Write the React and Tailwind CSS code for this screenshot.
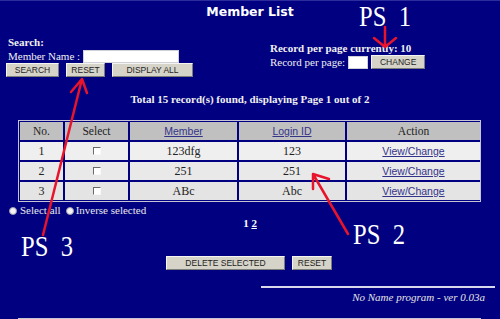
import React from "react";

const btn =
  "h-[14px] bg-[#d6d3c8] border border-t-[#f4f4f0] border-l-[#f4f4f0] border-r-[#7c7c78] border-b-[#7c7c78] font-['Liberation_Sans',sans-serif] text-[8.5px] leading-none text-[#1e1e1e] px-0";

const rows = [
  { no: "1", member: "123dfg", login: "123", bg: "bg-[#efefef]" },
  { no: "2", member: "251", login: "251", bg: "bg-[#e9e9e9]" },
  { no: "3", member: "ABc", login: "Abc", bg: "bg-[#e4e4e4]" },
];

const cols = "grid grid-cols-[43px_63px_107px_106px_133px] gap-[2px]";

function Check() {
  return (
    <span className="block h-[8px] w-[8px] border border-t-[#6a6a6a] border-l-[#6a6a6a] border-r-[#f8f8f8] border-b-[#f8f8f8] bg-white" />
  );
}

function Radio() {
  return <span className="inline-block h-[8px] w-[8px] rounded-full border border-[#9a9ab0] bg-[#f4f4f4]" />;
}

function Arrows() {
  return (
    <svg className="pointer-events-none absolute left-0 top-0" width="500" height="319" viewBox="0 0 500 319">
      <g stroke="#e8142c" strokeWidth="2.5" fill="none" strokeLinecap="round" strokeLinejoin="round">
        <path d="M385 26 L385 46 M374 37 L385 46 L396 37" />
        <path d="M43 234 L82 78 M71 91 L82 78 L87 92" />
        <path d="M348 233 L313 173 M313 188 L313 173 L329 178" />
      </g>
    </svg>
  );
}

function Note({ className, children }) {
  return (
    <div className={`absolute origin-left scale-x-[0.82] whitespace-pre text-[30px] leading-[30px] text-white ${className}`}>
      {children}
    </div>
  );
}

export default function App() {
  return (
    <div className="relative h-[319px] w-[500px] overflow-hidden border-t border-[#2c2c9c] bg-[#000080] font-['Liberation_Serif',serif] text-[#f0f0f0]">
      <h1 className="h-[19px] pt-[3px] text-center font-['DejaVu_Sans',sans-serif] text-[12.5px] font-bold leading-[15px] text-white">
        Member List
      </h1>

      <div className="mt-[16px] flex">
        <div className="w-[270px] pl-[6px]">
          <div className="h-[13px] pl-[2px] text-[11px] font-bold leading-[13px]">Search:</div>
          <div className="flex h-[14px] items-center pl-[2px] text-[11px]">
            <span>Member Name :</span>
            <span className="ml-[3px] h-[13px] w-[96px] border border-[#d0d0d8] bg-white" />
          </div>
          <div className="flex gap-[7px]">
            <button className={`${btn} w-[53px]`}>SEARCH</button>
            <button className={`${btn} w-[39px]`}>RESET</button>
            <button className={`${btn} w-[81px]`}>DISPLAY ALL</button>
          </div>
        </div>
        <div className="pt-[6px]">
          <div className="h-[13px] text-[11px] font-bold leading-[13px]">Record per page currently: 10</div>
          <div className="flex h-[14px] items-center text-[11px]">
            <span>Record per page:</span>
            <span className="ml-[3px] h-[13px] w-[20px] border border-[#d0d0d8] bg-white" />
            <button className={`${btn} ml-[3px] w-[54px]`}>CHANGE</button>
          </div>
        </div>
      </div>

      <div className="mt-[16px] h-[13px] text-center text-[11px] font-bold leading-[13px]">
        Total 15 record(s) found, displaying Page 1 out of 2
      </div>

      <div className="ml-[18px] mt-[14px] w-[463px] border border-[#c4c4d4] bg-[#000080] p-[1px]">
        <div className={`${cols} text-[12px] leading-[18px] text-[#222]`}>
          <div className="h-[18px] bg-[#c0c0c0] text-center text-[11.5px]">No.</div>
          <div className="h-[18px] bg-[#c0c0c0] text-center text-[11.5px]">Select</div>
          <div className="h-[18px] bg-[#c0c0c0] text-center font-['Liberation_Sans',sans-serif] text-[10.5px] text-[#33338a] underline">
            Member
          </div>
          <div className="h-[18px] bg-[#c0c0c0] text-center font-['Liberation_Sans',sans-serif] text-[10.5px] text-[#33338a] underline">
            Login ID
          </div>
          <div className="h-[18px] bg-[#c0c0c0] text-center text-[11.5px]">Action</div>
          {rows.map((r) => (
            <React.Fragment key={r.no}>
              <div className={`h-[18px] ${r.bg} text-center`}>{r.no}</div>
              <div className={`flex h-[18px] items-center justify-center ${r.bg}`}>
                <Check />
              </div>
              <div className={`h-[18px] ${r.bg} text-center`}>{r.member}</div>
              <div className={`h-[18px] ${r.bg} text-center`}>{r.login}</div>
              <div className={`h-[18px] ${r.bg} text-center font-['Liberation_Sans',sans-serif] text-[10.5px] text-[#33338a] underline`}>
                View/Change
              </div>
            </React.Fragment>
          ))}
        </div>
      </div>

      <div className="mt-[2px] flex h-[13px] items-center pl-[9px] text-[11px] leading-[13px] text-[#e8e8e8]">
        <Radio />
        <span className="ml-[3px]">Select all</span>
        <span className="ml-[5px] flex">
          <Radio />
        </span>
        <span className="ml-[2px]">Inverse selected</span>
      </div>

      <div className="h-[13px] text-center text-[11px] font-bold leading-[13px] text-white">
        1 <span className="underline">2</span>
      </div>

      <div className="mt-[26px] flex gap-[7px] pl-[166px]">
        <button className={`${btn} w-[119px]`}>DELETE SELECTED</button>
        <button className={`${btn} w-[40px]`}>RESET</button>
      </div>

      <div className="ml-[261px] mt-[16px] h-[2px] w-[234px] bg-[#d8d8ec]" />
      <div className="mt-[3px] pr-[15px] text-right text-[11px] italic leading-[13px] text-[#e4e4e4]">
        No Name program - ver 0.03a
      </div>

      <div className="ml-[18px] mt-[14px] h-[6px] w-[463px] border-l border-r border-t border-[#c4c4d4] p-[1px]">
        <div className={`${cols} h-full`}>
          <div />
          <div className="border-l border-[#c4c4d4]" />
          <div className="border-l border-[#c4c4d4]" />
          <div className="border-l border-[#c4c4d4]" />
          <div className="border-l border-[#c4c4d4]" />
        </div>
      </div>

      <Note className="left-[359px] top-[0px]">PS  1</Note>
      <Note className="left-[21px] top-[230px]">PS  3</Note>
      <Note className="left-[353px] top-[218px]">PS  2</Note>

      <Arrows />
    </div>
  );
}
